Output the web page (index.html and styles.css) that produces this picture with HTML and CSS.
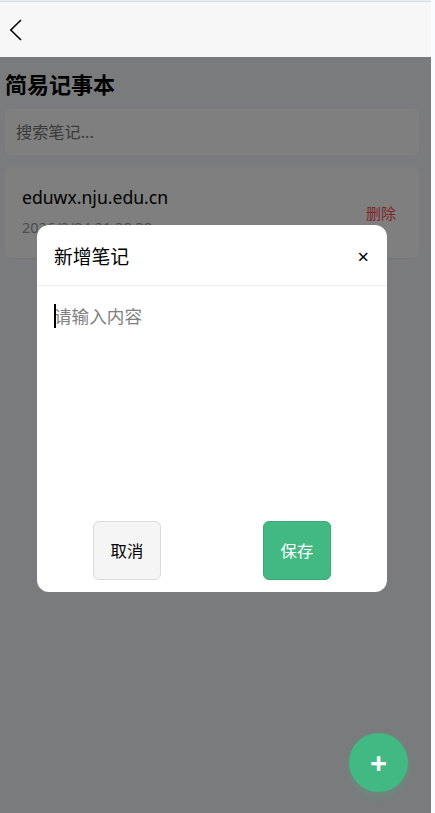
FILE: index.html
```html
<!DOCTYPE html>
<html lang="zh-CN">
<head>
    <meta charset="UTF-8">
    <meta name="viewport" content="width=device-width, initial-scale=1.0">
    <title>简易记事本</title>
    <link rel="stylesheet" href="styles.css">
</head>
<body>
    <div class="app">
        <header class="navbar">
            <svg class="back" width="14" height="22" viewBox="0 0 14 22">
                <path d="M12 1 L1.8 11 L12 21" fill="none" stroke="#000" stroke-width="1.6"/>
            </svg>
        </header>
        <main class="page">
            <h1 class="title">简易记事本</h1>
            <input class="search" type="text" placeholder="搜索笔记...">
            <div class="note">
                <div class="note-info">
                    <div class="note-title">eduwx.nju.edu.cn</div>
                    <div class="note-time">2026/2/24 21:38:38</div>
                </div>
                <span class="note-delete">删除</span>
            </div>
            <div class="mask"></div>
            <!-- 新增笔记弹窗 -->
            <div class="modal">
                <div class="modal-header">
                    <span class="modal-title">新增笔记</span>
                    <span class="modal-close">×</span>
                </div>
                <div class="modal-body">
                    <span class="cursor"></span><span class="placeholder">请输入内容</span>
                </div>
                <div class="modal-footer">
                    <button class="btn">取消</button>
                    <button class="btn btn-save">保存</button>
                </div>
            </div>
            <button class="add">+</button>
        </main>
    </div>
</body>
</html>
```

FILE: styles.css
```css
* {
    box-sizing: border-box;
}
body {
    margin: 0;
    height: 813px;
    padding-right: 4px;
    overflow: hidden;
    background: #fafbff;
    font-family: "Noto Sans", "Noto Sans CJK SC", sans-serif;
    color: #000;
}
input, button {
    font-family: inherit;
}
.app {
    height: 100%;
    display: flex;
    flex-direction: column;
    border-top: 1px solid #e8edf5;
}
.navbar {
    height: 56px;
    display: flex;
    align-items: center;
    padding-left: 9px;
    border-top: 1px solid #d8dde2;
    background: #f7f7f7;
}
.back {
    display: block;
}
.page {
    position: relative;
    flex: 1;
    padding: 12px 12px 0 5px;
    background: #f5f7fa;
}
.title {
    margin: 0 0 10px;
    font-size: 22px;
    line-height: 30px;
}
.search {
    display: block;
    width: 100%;
    height: 46px;
    margin-bottom: 12px;
    padding: 0 11px;
    border: none;
    border-radius: 6px;
    background: #fff;
    font-size: 16.2px;
}
.search::placeholder {
    color: #757575;
}
.note {
    display: flex;
    justify-content: space-between;
    align-items: center;
    height: 91px;
    padding: 0 23px 0 17px;
    border-radius: 6px;
    background: #fff;
    box-shadow: 0 1px 1px rgba(0, 0, 0, 0.05);
}
.note-info {
    padding-bottom: 3px;
}
.note-title {
    margin-bottom: 8px;
    font-size: 17.6px;
    line-height: 24px;
}
.note-time {
    color: #999;
    font-size: 14.5px;
    line-height: 20px;
}
.note-delete {
    color: #ff4d4f;
    font-size: 15px;
}
.mask {
    position: absolute;
    inset: 0;
    background: rgba(0, 0, 0, 0.5);
}
.modal {
    position: absolute;
    top: 168px;
    left: 37px;
    width: 350px;
    height: 367px;
    display: flex;
    flex-direction: column;
    border-radius: 12px;
    background: #fff;
}
.modal-header {
    height: 61px;
    display: flex;
    justify-content: space-between;
    align-items: center;
    padding: 2px 18px 0 17px;
    border-bottom: 1px solid #eee;
}
.modal-title {
    font-size: 18.8px;
}
.modal-close {
    font-size: 20px;
}
.modal-body {
    flex: 1;
    display: flex;
    align-items: flex-start;
    padding: 18px 17px;
    line-height: 25px;
}
.cursor {
    width: 2px;
    height: 24px;
    margin-right: -2px;
    background: #000;
    z-index: 1;
}
.placeholder {
    color: #808080;
    font-size: 17.6px;
}
.modal-footer {
    display: flex;
    justify-content: space-between;
    padding: 0 56px 12px;
}
.btn {
    width: 68px;
    height: 59px;
    padding: 0 0 2px;
    border: 1px solid #dbdbdb;
    border-radius: 6px;
    background: #f5f5f5;
    color: #000;
    font-size: 16.4px;
}
.btn-save {
    border-color: #3ca876;
    background: #42b983;
    color: #fff;
}
.add {
    position: absolute;
    right: 23px;
    bottom: 21px;
    width: 59px;
    height: 59px;
    padding: 0;
    border: none;
    border-radius: 50%;
    background: #42b983;
    box-shadow: 0 4px 10px rgba(66, 185, 131, 0.3);
    color: #fff;
    font-size: 30px;
    font-weight: bold;
}
```
